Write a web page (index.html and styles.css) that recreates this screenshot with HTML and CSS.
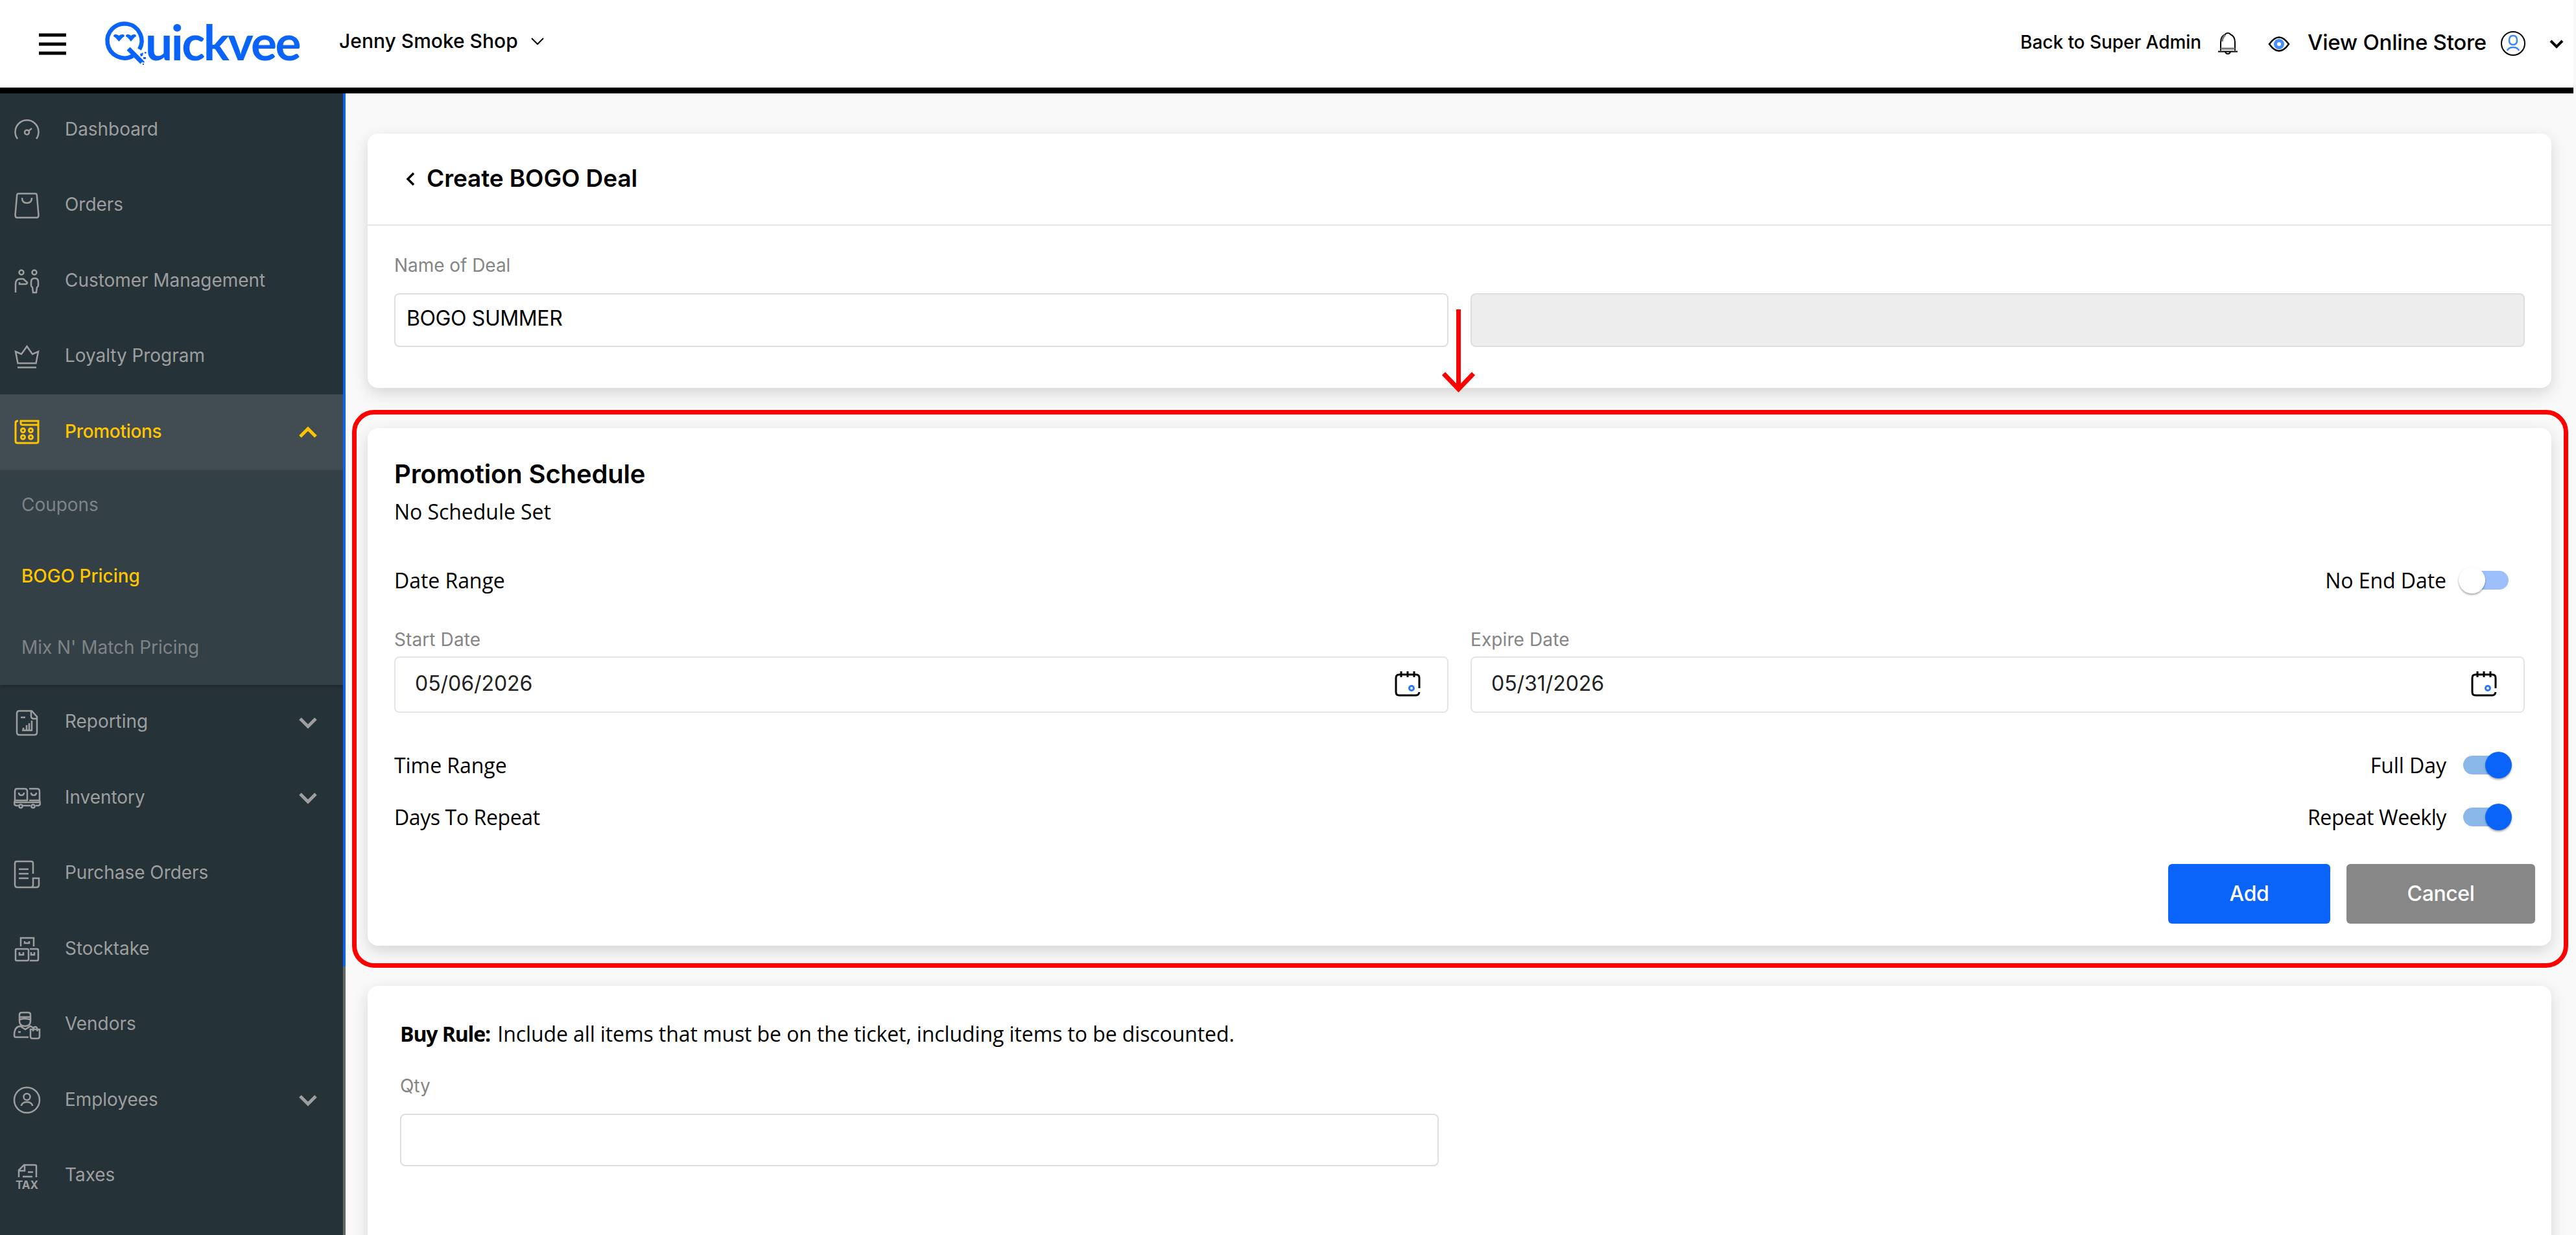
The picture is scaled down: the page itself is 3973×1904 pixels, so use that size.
FILE: index.html
```html
<!DOCTYPE html>
<html lang="en">
<head>
    <meta charset="UTF-8">
    <meta name="viewport" content="width=device-width, initial-scale=1.0">
    <title>Create BOGO Deal - Quickvee</title>
    <link rel="stylesheet" href="styles.css">
</head>
<body>
    <header class="topbar">
        <svg class="menu-btn" viewBox="0 0 42 34"><path d="M0 3h42M0 17h42M0 31h42"/></svg>
        <div class="logo">
            <svg class="logo-mark" viewBox="0 0 66 70">
                <path class="ring" d="M55 45.200A26.500 26.500 0 1 0 45 55.100"/>
                <path class="tail" d="M38 44l21 21"/>
                <path class="fill" d="M15 25q0-3 3-3 3 0 5.500 2 2.500-2 5.500-2 3 0 3 3l-3 2-5.500 6-5.500-6zM34 25q0-3 3-3 3 0 5 2 2-2 5-2 3 0 3 3l-3 2-5 6-5-6z"/>
                <path class="fill" d="M56 52l5-2-1 5-3 1zM63 49h2.500v2.500h-2.500zM61 57h4v3h-4zM60 63h2.500v2.500H60zM60 67h2v2h-2z"/>
            </svg>
            <span class="logo-text">uickvee</span>
        </div>
        <div class="store">
            <span>Jenny Smoke Shop</span>
            <svg class="store-arrow" viewBox="0 0 20 12"><path d="M1 1l9 9 9-9"/></svg>
        </div>
        <div class="top-right">
            <span class="back-link">Back to Super Admin</span>
            <svg class="bell" viewBox="0 0 30 34">
                <path d="M4 28V15q0-9 7-12 1-2 4-2t4 2q7 3 7 12v13M0 29.500h30M11 30q1 3 4 3t4-3"/>
                <path class="soft" d="M4 25h22M11 4q-4 3-5 10"/>
            </svg>
            <svg class="eye" viewBox="0 0 32 24">
                <path d="M1 12q15-21 30 0-15 21-30 0z"/>
                <circle cx="16" cy="12" r="5.500"/>
            </svg>
            <span class="view-link">View Online Store</span>
            <svg class="user" viewBox="0 0 38 38">
                <circle cx="19" cy="19" r="18"/>
                <path class="blue" d="M19 7q6 0 6 7t-6 7-6-7 6-7zM10 30q2-5 9-5t9 5"/>
            </svg>
            <svg class="user-arrow" viewBox="0 0 22 14"><path d="M2 2l9 9 9-9"/></svg>
        </div>
    </header>

    <div class="layout">
        <aside class="sidebar">
            <nav class="menu">
                <a class="item">
                    <svg class="icon" viewBox="0 0 42 42"><path d="M7 35A18 18 0 1 1 36 35M24 23l5-4"/><circle cx="21.500" cy="25" r="3.500"/></svg>
                    <span>Dashboard</span>
                </a>
                <a class="item">
                    <svg class="icon" viewBox="0 0 42 42"><path d="M8.500 2.500h26q2 0 2.300 2l2.700 31q0 4-3 4h-30q-3 0-3-4l2.700-31q.3-2 2.300-2zM14 9q0 8 7.500 8t7.500-8"/></svg>
                    <span>Orders</span>
                </a>
                <a class="item">
                    <svg class="icon" viewBox="0 0 42 42"><circle cx="13" cy="8" r="3.500"/><circle cx="33" cy="8" r="3.500"/><path d="M4 39V26q0-8 7-8h5l6 5.500q0 2.500-3 2.500h-9v-3M28 23q0-6 5.500-6t5.500 6v5q0 2-2 3l-1 8h-5l-1-8q-2-1-2-3z"/></svg>
                    <span>Customer Management</span>
                </a>
                <a class="item">
                    <svg class="icon" viewBox="0 0 42 42"><path d="M4 13l9 4 8.500-12L30 17l9-4-3.500 18h-28zM7 37.500h29"/></svg>
                    <span>Loyalty Program</span>
                </a>
                <a class="item active">
                    <svg class="icon" viewBox="0 0 42 42"><path d="M8 4H7Q4 4 4 7v28q0 3 3 3h29q3 0 3-3V4H12v3q0 3 3 3h24"/><circle cx="15.500" cy="18.500" r="3"/><circle cx="27.500" cy="18.500" r="3"/><circle cx="15.500" cy="29" r="3"/><circle cx="27.500" cy="29" r="3"/></svg>
                    <span>Promotions</span>
                    <svg class="arrow" viewBox="0 0 30 20"><path d="M3 17L15 5l12 12"/></svg>
                </a>
                <div class="submenu">
                    <a>Coupons</a>
                    <a class="current">BOGO Pricing</a>
                    <a>Mix N' Match Pricing</a>
                </div>
                <a class="item">
                    <svg class="icon" viewBox="0 0 42 42"><path d="M37 16v20q0 4-4 4H10q-4 0-4-4V7q0-4 4-4h19l8 9v3h-5q-4 0-4-4V4M12 13h7M14 33h16M16 33v-4M21 33v-8M25 33V22M29 33V18"/></svg>
                    <span>Reporting</span>
                    <svg class="arrow" viewBox="0 0 30 20"><path d="M3 4l12 12L27 4"/></svg>
                </a>
                <a class="item">
                    <svg class="icon" viewBox="0 0 42 42"><path d="M6 7h12q4 0 4 4v14H3V11q0-4 3-4zM25 7h12q4 0 4 4v14H25M9 13q0 4 4 4t4-4M28 13q0 4 4 4t4-4M2 28h40M3 25q-3 8 3 8h3M15 33h12M35 33h3q6 0 3-8"/><circle cx="12" cy="34" r="2.500"/><circle cx="31" cy="34" r="2.500"/></svg>
                    <span>Inventory</span>
                    <svg class="arrow" viewBox="0 0 30 20"><path d="M3 4l12 12L27 4"/></svg>
                </a>
                <a class="item">
                    <svg class="icon" viewBox="0 0 42 42"><path d="M31 21V5q0-3-3-3H6Q3 2 3 5v33q0 4 4 4h29q4 0 4-4V28h-9v10q0 4-3 4M9 14h15M9 21h15M9 28h15"/></svg>
                    <span>Purchase Orders</span>
                </a>
                <a class="item">
                    <svg class="icon" viewBox="0 0 42 42"><path d="M12 17V4h20v13M18 9v3h7V9M6 21h16q2 0 2 2v14q0 2-2 2H6q-2 0-2-2V23q0-2 2-2zM26 21h11q2 0 2 2v14q0 2-2 2H26M10 26v4h6v-4M28 26v4h5v-4"/></svg>
                    <span>Stocktake</span>
                </a>
                <a class="item">
                    <svg class="icon" viewBox="0 0 42 42"><path d="M10 14V5q0-3 4-3h9q4 0 4 3v9M10 9h17M10 13q8-3 17 0v2q0 8-8.500 8T10 15zM24 40H4q-2 0-2-3 0-13 9-14l8 5 8-5 5 3M8 32h4M27 28h14v11q0 3-3 3h-8q-3 0-3-3zM31 31q0-7 3.500-7t3 7"/></svg>
                    <span>Vendors</span>
                </a>
                <a class="item">
                    <svg class="icon" viewBox="0 0 42 42"><circle cx="21.500" cy="21" r="19.500"/><circle cx="21.500" cy="16" r="5"/><path d="M13 30v-1q2-5 8.500-5t8.500 5v1"/></svg>
                    <span>Employees</span>
                    <svg class="arrow" viewBox="0 0 30 20"><path d="M3 4l12 12L27 4"/></svg>
                </a>
                <a class="item">
                    <svg class="icon" viewBox="0 0 42 42"><path d="M9 23V12l8-8h17q2 0 2 2v17M9 13h9V4M15 22h15M23 15h8"/><text x="4" y="41">TAX</text></svg>
                    <span>Taxes</span>
                </a>
            </nav>
            <div class="scrollbar"><div class="thumb"></div></div>
        </aside>

        <main class="content">
            <section class="card">
                <div class="card-head">
                    <svg class="back" viewBox="0 0 14 22"><path d="M12 2l-9 9 9 9"/></svg>
                    <h1>Create BOGO Deal</h1>
                </div>
                <div class="deal">
                    <label>Name of Deal</label>
                    <div class="cols">
                        <input class="box" type="text" value="BOGO SUMMER">
                        <input class="box" type="text" disabled>
                    </div>
                </div>
            </section>

            <section class="card schedule">
                <h2>Promotion Schedule</h2>
                <p class="status">No Schedule Set</p>

                <div class="row date-row">
                    <span>Date Range</span>
                    <div class="switch">No End Date <i class="toggle"></i></div>
                </div>

                <div class="cols dates">
                    <div>
                        <label>Start Date</label>
                        <div class="date-box">
                            <span>05/06/2026</span>
                            <svg class="calendar" viewBox="0 0 40 41"><path d="M38 27V11q0-5-5-5H7Q2 6 2 11v22q0 5 5 5h26q4 0 5-5M10 1v9M20 1v9M30 1v9"/><circle cx="26" cy="27" r="3.500"/></svg>
                        </div>
                    </div>
                    <div>
                        <label>Expire Date</label>
                        <div class="date-box">
                            <span>05/31/2026</span>
                            <svg class="calendar" viewBox="0 0 40 41"><path d="M38 27V11q0-5-5-5H7Q2 6 2 11v22q0 5 5 5h26q4 0 5-5M10 1v9M20 1v9M30 1v9"/><circle cx="26" cy="27" r="3.500"/></svg>
                        </div>
                    </div>
                </div>

                <div class="row time-row">
                    <span>Time Range</span>
                    <div class="switch">Full Day <i class="toggle on"></i></div>
                </div>
                <div class="row days-row">
                    <span>Days To Repeat</span>
                    <div class="switch">Repeat Weekly <i class="toggle on"></i></div>
                </div>

                <div class="buttons">
                    <button class="add">Add</button>
                    <button class="cancel">Cancel</button>
                </div>
            </section>

            <section class="card rule">
                <p><b>Buy Rule:</b> Include all items that must be on the ticket, including items to be discounted.</p>
                <label>Qty</label>
                <input class="box" type="text">
            </section>
        </main>
    </div>

    <!-- Red callout around the schedule card -->
    <div class="callout"></div>
    <svg class="callout-arrow" viewBox="0 0 52 130"><path d="M25.500 0v122M2.500 99l23 24 23-24"/></svg>
</body>
</html>
```
FILE: styles.css
```css
* {
    box-sizing: border-box;
}

body {
    margin: 0;
    height: 1904px;
    overflow: hidden;
    position: relative;
    background-color: #f9f9f9;
    font-family: Inter, "Liberation Sans", sans-serif;
    font-size: 28px;
    letter-spacing: -0.05px;
    color: #000;
}

svg {
    display: block;
    flex: none;
    fill: none;
    stroke: #000;
    stroke-width: 2;
    overflow: visible;
}

h1, h2, p {
    margin: 0;
}

/* Top bar */
.topbar {
    display: flex;
    align-items: center;
    width: 3969px;
    height: 144px;
    padding: 0 15px 0 60px;
    background-color: #fff;
    border-bottom: 9px solid #000;
}

.menu-btn {
    width: 42px;
    height: 34px;
    stroke-width: 5;
}

.logo {
    display: flex;
    align-items: flex-start;
    width: 362px;
    height: 70px;
    margin: 0 0 4px 58px;
}

.logo-mark {
    width: 66px;
    height: 70px;
    stroke: #0a64f9;
}

.logo-mark .ring {
    stroke-width: 6.5;
}

.logo-mark .tail {
    stroke-width: 7;
}

.logo-mark .fill {
    fill: #0a64f9;
    stroke: none;
}

.logo-text {
    margin-left: -2px;
    font-family: Lato, sans-serif;
    font-size: 75px;
    font-weight: 700;
    line-height: 66px;
    letter-spacing: -2.6px;
    color: #0a64f9;
}

.store {
    display: flex;
    align-items: center;
    gap: 20px;
    margin: 0 0 10px 1px;
    font-size: 30px;
    font-weight: 500;
    letter-spacing: 0;
}

.store-arrow {
    width: 20px;
    height: 12px;
    margin-top: 3px;
}

.top-right {
    display: flex;
    align-items: center;
    margin-left: auto;
    margin-bottom: 5px;
    font-weight: 500;
}

.bell {
    width: 30px;
    height: 34px;
    margin: 4px 48px 0 26px;
}

.bell .soft {
    stroke: #777;
    stroke-width: 3;
}

.eye {
    width: 32px;
    height: 24px;
    margin: 6px 28px 0 0;
    stroke-width: 2.5;
}

.eye circle {
    stroke: #4a8efb;
    stroke-width: 5;
}

.view-link {
    font-size: 33px;
    letter-spacing: -0.25px;
}

.user {
    width: 38px;
    height: 38px;
    margin: 4px 37px 0 22px;
}

.user .blue {
    stroke: #3c85fb;
    stroke-width: 2.5;
}

.user-arrow {
    width: 22px;
    height: 14px;
    margin-top: 5px;
    stroke-width: 4;
}

/* Sidebar */
.layout {
    display: flex;
    height: 1760px;
    overflow: hidden;
}

.sidebar {
    display: flex;
    width: 533px;
    background-color: #253238;
}

.menu {
    flex: 1;
    margin-top: -2px;
}

.item {
    display: flex;
    align-items: center;
    height: 116.5px;
    padding: 0 39px 0 20px;
    color: #9e9e9e;
}

.item span {
    flex: 1;
    margin-left: 38px;
    padding-bottom: 3px;
}

.icon {
    width: 42px;
    height: 42px;
    stroke: #9e9e9e;
    stroke-width: 2.5;
}

.icon text {
    font-size: 17px;
    font-weight: 700;
    letter-spacing: 0;
    fill: #9e9e9e;
    stroke: none;
}

.arrow {
    width: 30px;
    height: 20px;
    stroke: #9e9e9e;
    stroke-width: 5;
}

.item.active {
    background-color: #414d53;
    color: #ffc400;
    font-weight: 500;
    letter-spacing: -0.3px;
}

.item.active .icon {
    stroke: #ffc400;
    stroke-width: 3;
}

.item.active .arrow {
    stroke: #ffc400;
}

.submenu {
    background-color: #334146;
    box-shadow: 0 2px 6px rgba(0, 0, 0, 0.25);
}

.submenu a {
    display: flex;
    align-items: center;
    height: 110.4px;
    padding: 0 0 4px 33px;
    color: #7f8385;
}

.submenu .current {
    color: #ffc400;
    font-weight: 500;
}

.scrollbar {
    width: 4px;
    background-color: #666;
}

.thumb {
    height: 1346px;
    background-color: #0a64f9;
}

/* Page content */
.content {
    width: 3368px;
    margin: 62px 0 0 34px;
}

.card {
    margin-bottom: 62px;
    background-color: #fff;
    border-radius: 16px;
    box-shadow: 0 8px 24px rgba(0, 0, 0, 0.15);
}

.card-head {
    display: flex;
    align-items: center;
    height: 142px;
    padding: 0 0 4px 59px;
    border-bottom: 2px solid #e6e6e6;
}

.back {
    width: 14px;
    height: 22px;
    margin-top: 4px;
    stroke-width: 3.5;
}

h1 {
    margin-left: 18px;
    font-size: 37px;
    font-weight: 600;
    letter-spacing: -0.1px;
}

label {
    display: block;
    color: #858585;
    line-height: 36px;
}

.deal {
    padding: 43px 41px 63px;
}

.cols {
    display: grid;
    grid-template-columns: 1fr 1fr;
    gap: 34px;
}

.box {
    display: block;
    width: 100%;
    height: 83px;
    margin-top: 25px;
    padding: 0 17px 6px;
    border: 2px solid #dedede;
    border-radius: 8px;
    background-color: #fff;
    font-family: inherit;
    font-size: 32px;
    letter-spacing: -0.4px;
    color: #000;
}

.box:disabled {
    background-color: #ededed;
}

.schedule {
    height: 798px;
    padding: 47px 41px 0;
    font-family: "Open Sans", "Noto Sans", sans-serif;
    font-size: 32px;
    letter-spacing: -0.05px;
}

.schedule h2,
.schedule label,
.date-box,
.buttons {
    font-family: Inter, "Liberation Sans", sans-serif;
}

h2 {
    font-size: 40px;
    font-weight: 600;
    line-height: 48px;
    letter-spacing: -0.15px;
}

.status {
    margin-top: 12px;
    line-height: 44px;
}

.row {
    display: flex;
    align-items: center;
    justify-content: space-between;
    height: 42px;
    padding-right: 19px;
    line-height: 42px;
}

.date-row {
    margin-top: 63px;
}

.time-row {
    margin-top: 60px;
}

.days-row {
    margin-top: 38px;
    letter-spacing: -0.4px;
}

.switch {
    display: flex;
    gap: 18px;
}

/* Toggle: the i is the box, ::before the track, ::after the knob */
.toggle {
    position: relative;
    width: 84px;
    height: 42px;
}

.toggle::before {
    content: "";
    position: absolute;
    left: 8px;
    top: 6px;
    width: 70px;
    height: 29px;
    border-radius: 15px;
    background-color: #9dc0fd;
}

.toggle::after {
    content: "";
    position: absolute;
    left: 1px;
    top: 0;
    width: 41px;
    height: 41px;
    border-radius: 50%;
    background-color: #fff;
    box-shadow: 0 2px 3px rgba(0, 0, 0, 0.35);
}

.toggle.on::before {
    background-color: #8ab8e8;
}

.toggle.on::after {
    left: 42px;
    background-color: #0a64f9;
}

.dates {
    margin-top: 54px;
}

.dates label {
    font-size: 28px;
    line-height: 32px;
    letter-spacing: 0.1px;
}

.date-box {
    display: flex;
    align-items: center;
    justify-content: space-between;
    height: 87px;
    margin-top: 10px;
    padding: 0 41px 0 30px;
    border: 2px solid #e4e4ec;
    border-radius: 8px;
    color: #222;
}

.date-box span {
    padding-bottom: 5px;
}

.calendar {
    width: 40px;
    height: 41px;
    margin-bottom: 2px;
    stroke-width: 3;
}

.calendar circle {
    stroke: #2b78fa;
}

.buttons {
    display: flex;
    justify-content: flex-end;
    gap: 25px;
    margin: 51px -16px 0 0;
}

.buttons button {
    height: 92px;
    padding: 0 0 2px;
    border: none;
    border-radius: 6px;
    color: #fff;
    font-family: inherit;
    font-size: 32px;
    font-weight: 500;
    letter-spacing: -0.4px;
}

.add {
    width: 250px;
    background-color: #0a64f9;
}

.cancel {
    width: 291px;
    background-color: #878787;
}

.rule {
    height: 500px;
    padding: 52px 50px;
}

.rule p {
    font-family: "Open Sans", "Noto Sans", sans-serif;
    font-size: 32px;
    line-height: 44px;
    letter-spacing: -0.1px;
}

.rule b {
    margin-right: 3px;
    letter-spacing: -1.1px;
}

.rule label {
    margin-top: 40px;
}

.rule .box {
    width: 1602px;
    height: 81px;
}

/* Callout drawn over the page */
.callout {
    position: absolute;
    left: 543px;
    top: 632px;
    width: 3418px;
    height: 860px;
    border: 7px solid #f00;
    border-radius: 34px;
}

.callout-arrow {
    position: absolute;
    left: 2224px;
    top: 477px;
    width: 52px;
    height: 130px;
    stroke: #f00;
    stroke-width: 7;
}
```
